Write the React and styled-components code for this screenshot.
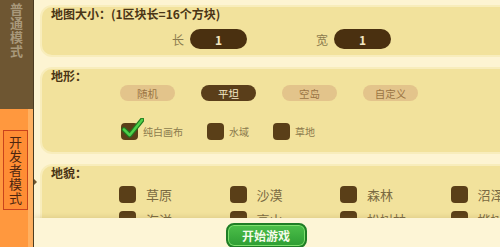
import styled, { createGlobalStyle } from "styled-components";

const GlobalStyle = createGlobalStyle`
  html, body {
    margin: 0;
    padding: 0;
    background: #fdf4d2;
    font-family: "Noto Sans CJK SC", "Noto Sans", sans-serif;
  }
`;

const terrains = [
  { label: "随机", active: false },
  { label: "平坦", active: true },
  { label: "空岛", active: false },
  { label: "自定义", active: false },
];

const options = [
  { label: "纯白画布", checked: true },
  { label: "水域", checked: false },
  { label: "草地", checked: false },
];

const landforms = [
  "草原",
  "沙漠",
  "森林",
  "沼泽",
  "海洋",
  "高山",
  "松树林",
  "桦树林",
];

export default function App() {
  return (
    <>
      <GlobalStyle />
      <Screen>
        <Sidebar>
          <NormalTab>
            <VerticalText>普通模式</VerticalText>
          </NormalTab>
          <DevTab>
            <DevLabel>
              <VerticalText>开发者模式</VerticalText>
            </DevLabel>
            <TabArrow />
          </DevTab>
        </Sidebar>

        <Main>
          <Content>
            <Panel $height={52}>
              <PanelTitle>地图大小：(1区块长=16个方块)</PanelTitle>
              <SizeRow>
                <SizeField>
                  <FieldLabel>长</FieldLabel>
                  <ValuePill>1</ValuePill>
                </SizeField>
                <SizeField>
                  <FieldLabel>宽</FieldLabel>
                  <ValuePill>1</ValuePill>
                </SizeField>
              </SizeRow>
            </Panel>

            <Panel $height={87}>
              <PanelTitle>地形：</PanelTitle>
              <TerrainRow>
                {terrains.map((t) => (
                  <TerrainPill key={t.label} $active={t.active}>
                    {t.label}
                  </TerrainPill>
                ))}
              </TerrainRow>
              <OptionRow>
                {options.map((o) => (
                  <Option key={o.label}>
                    <Box>
                      {o.checked && (
                        <Check viewBox="0 0 24 22">
                          <path
                            d="M3 12 L9 18 L22 2"
                            fill="none"
                            stroke="#1f7a1f"
                            strokeWidth="5"
                            strokeLinecap="round"
                            strokeLinejoin="round"
                          />
                          <path
                            d="M3 12 L9 18 L22 2"
                            fill="none"
                            stroke="#4fd04a"
                            strokeWidth="2.6"
                            strokeLinecap="round"
                            strokeLinejoin="round"
                          />
                        </Check>
                      )}
                    </Box>
                    <OptionLabel>{o.label}</OptionLabel>
                  </Option>
                ))}
              </OptionRow>
            </Panel>

            <Panel $height={90}>
              <PanelTitle>地貌：</PanelTitle>
              <LandGrid>
                {landforms.map((name) => (
                  <Option key={name}>
                    <Box />
                    <LandLabel>{name}</LandLabel>
                  </Option>
                ))}
              </LandGrid>
            </Panel>
          </Content>

          <Footer>
            <StartButton>开始游戏</StartButton>
          </Footer>
        </Main>
      </Screen>
    </>
  );
}

const Screen = styled.div`
  width: 500px;
  height: 247px;
  display: flex;
  overflow: hidden;
  background: #fdf4d2;
`;

const Sidebar = styled.div`
  width: 33px;
  flex-shrink: 0;
  display: flex;
  flex-direction: column;
  border-right: 1px solid #4a3a20;
`;

const VerticalText = styled.span`
  writing-mode: vertical-rl;
  text-orientation: upright;
  white-space: nowrap;
  letter-spacing: 1px;
  line-height: 1;
`;

const NormalTab = styled.div`
  height: 109px;
  background: #6e5632;
  display: flex;
  justify-content: center;
  padding-top: 3px;
  box-sizing: border-box;
  color: #a8987a;
  font-size: 13px;
  font-weight: 700;
`;

const DevTab = styled.div`
  flex: 1;
  position: relative;
  background: linear-gradient(to right, #ff983e 0 28px, #ffb060 28px);
  padding: 21px 2px 0 3px;
`;

const DevLabel = styled.div`
  width: 25px;
  height: 80px;
  border: 1.5px solid #c9431c;
  background: #ff8d34;
  display: flex;
  justify-content: center;
  padding-top: 5px;
  box-sizing: border-box;
  color: #4e2610;
  font-size: 13px;
`;

const TabArrow = styled.div`
  position: absolute;
  right: -4px;
  top: 70px;
  width: 0;
  height: 0;
  border-top: 3px solid transparent;
  border-bottom: 3px solid transparent;
  border-left: 3px solid #6e5632;
`;

const Main = styled.div`
  flex: 1;
  display: flex;
  flex-direction: column;
  min-width: 0;
`;

const Content = styled.div`
  flex: 1;
  overflow: hidden;
  padding: 5px 0 0 6px;
  display: flex;
  flex-direction: column;
  gap: 10px;
`;

const Panel = styled.div`
  height: ${(p) => p.$height}px;
  flex-shrink: 0;
  box-sizing: border-box;
  margin-right: -20px;
  background: #f2e29c;
  border: 2px solid #f8edbc;
  border-radius: 12px;
  padding: 0 0 0 9px;
`;

const PanelTitle = styled.div`
  font-size: 12px;
  font-weight: 700;
  color: #4a3516;
  line-height: 14px;
`;

const SizeRow = styled.div`
  display: flex;
  gap: 69px;
  padding: 8px 0 0 121px;
`;

const SizeField = styled.div`
  display: flex;
  align-items: center;
  gap: 6px;
`;

const FieldLabel = styled.span`
  font-size: 12px;
  color: #8c7b4e;
`;

const ValuePill = styled.div`
  width: 57px;
  height: 20px;
  border-radius: 10px;
  background: #4a3010;
  color: #f3e6c2;
  font-size: 12px;
  font-weight: 700;
  display: flex;
  align-items: center;
  justify-content: center;
`;

const TerrainRow = styled.div`
  display: flex;
  gap: 26px;
  padding: 2px 0 0 69px;
`;

const TerrainPill = styled.div`
  width: 55px;
  height: 16px;
  border-radius: 8px;
  background: ${(p) => (p.$active ? "#5a3e1a" : "#e3c48b")};
  color: ${(p) => (p.$active ? "#f5e9c6" : "#9a7444")};
  font-size: 10.5px;
  display: flex;
  align-items: center;
  justify-content: center;
`;

const OptionRow = styled.div`
  display: flex;
  gap: 24px;
  padding: 22px 0 0 70px;
`;

const Option = styled.div`
  display: flex;
  align-items: center;
  gap: 5px;
`;

const Box = styled.div`
  position: relative;
  width: 17px;
  height: 17px;
  border-radius: 4px;
  background: #5a3f18;
  flex-shrink: 0;
`;

const Check = styled.svg`
  position: absolute;
  left: 0;
  top: -5px;
  width: 23px;
  height: 21px;
`;

const OptionLabel = styled.span`
  font-size: 10px;
  color: #8c7b4e;
`;

const LandGrid = styled.div`
  display: grid;
  grid-template-columns: repeat(4, 110.5px);
  row-gap: 6px;
  padding: 5px 0 0 68px;
`;

const LandLabel = styled.span`
  font-size: 13px;
  color: #7a6a42;
  margin-left: 5px;
`;

const Footer = styled.div`
  height: 29px;
  flex-shrink: 0;
  background: #fdf5d6;
  box-shadow: 0 -2px 4px rgba(150, 120, 60, 0.15);
  display: flex;
  justify-content: center;
  align-items: flex-start;
  padding: 5px 0 0 0;
  box-sizing: border-box;
  position: relative;
`;

const StartButton = styled.button`
  width: 81px;
  height: 25px;
  border: 2px solid #1f7d25;
  border-radius: 8px;
  background: linear-gradient(#4cc04a, #2e9d33);
  color: #f4fbe9;
  font-family: "Noto Sans CJK SC", sans-serif;
  font-size: 12px;
  font-weight: 700;
  padding: 0;
  margin-left: -2px;
  box-shadow: inset 0 0 0 1px #7ee06e;
`;
